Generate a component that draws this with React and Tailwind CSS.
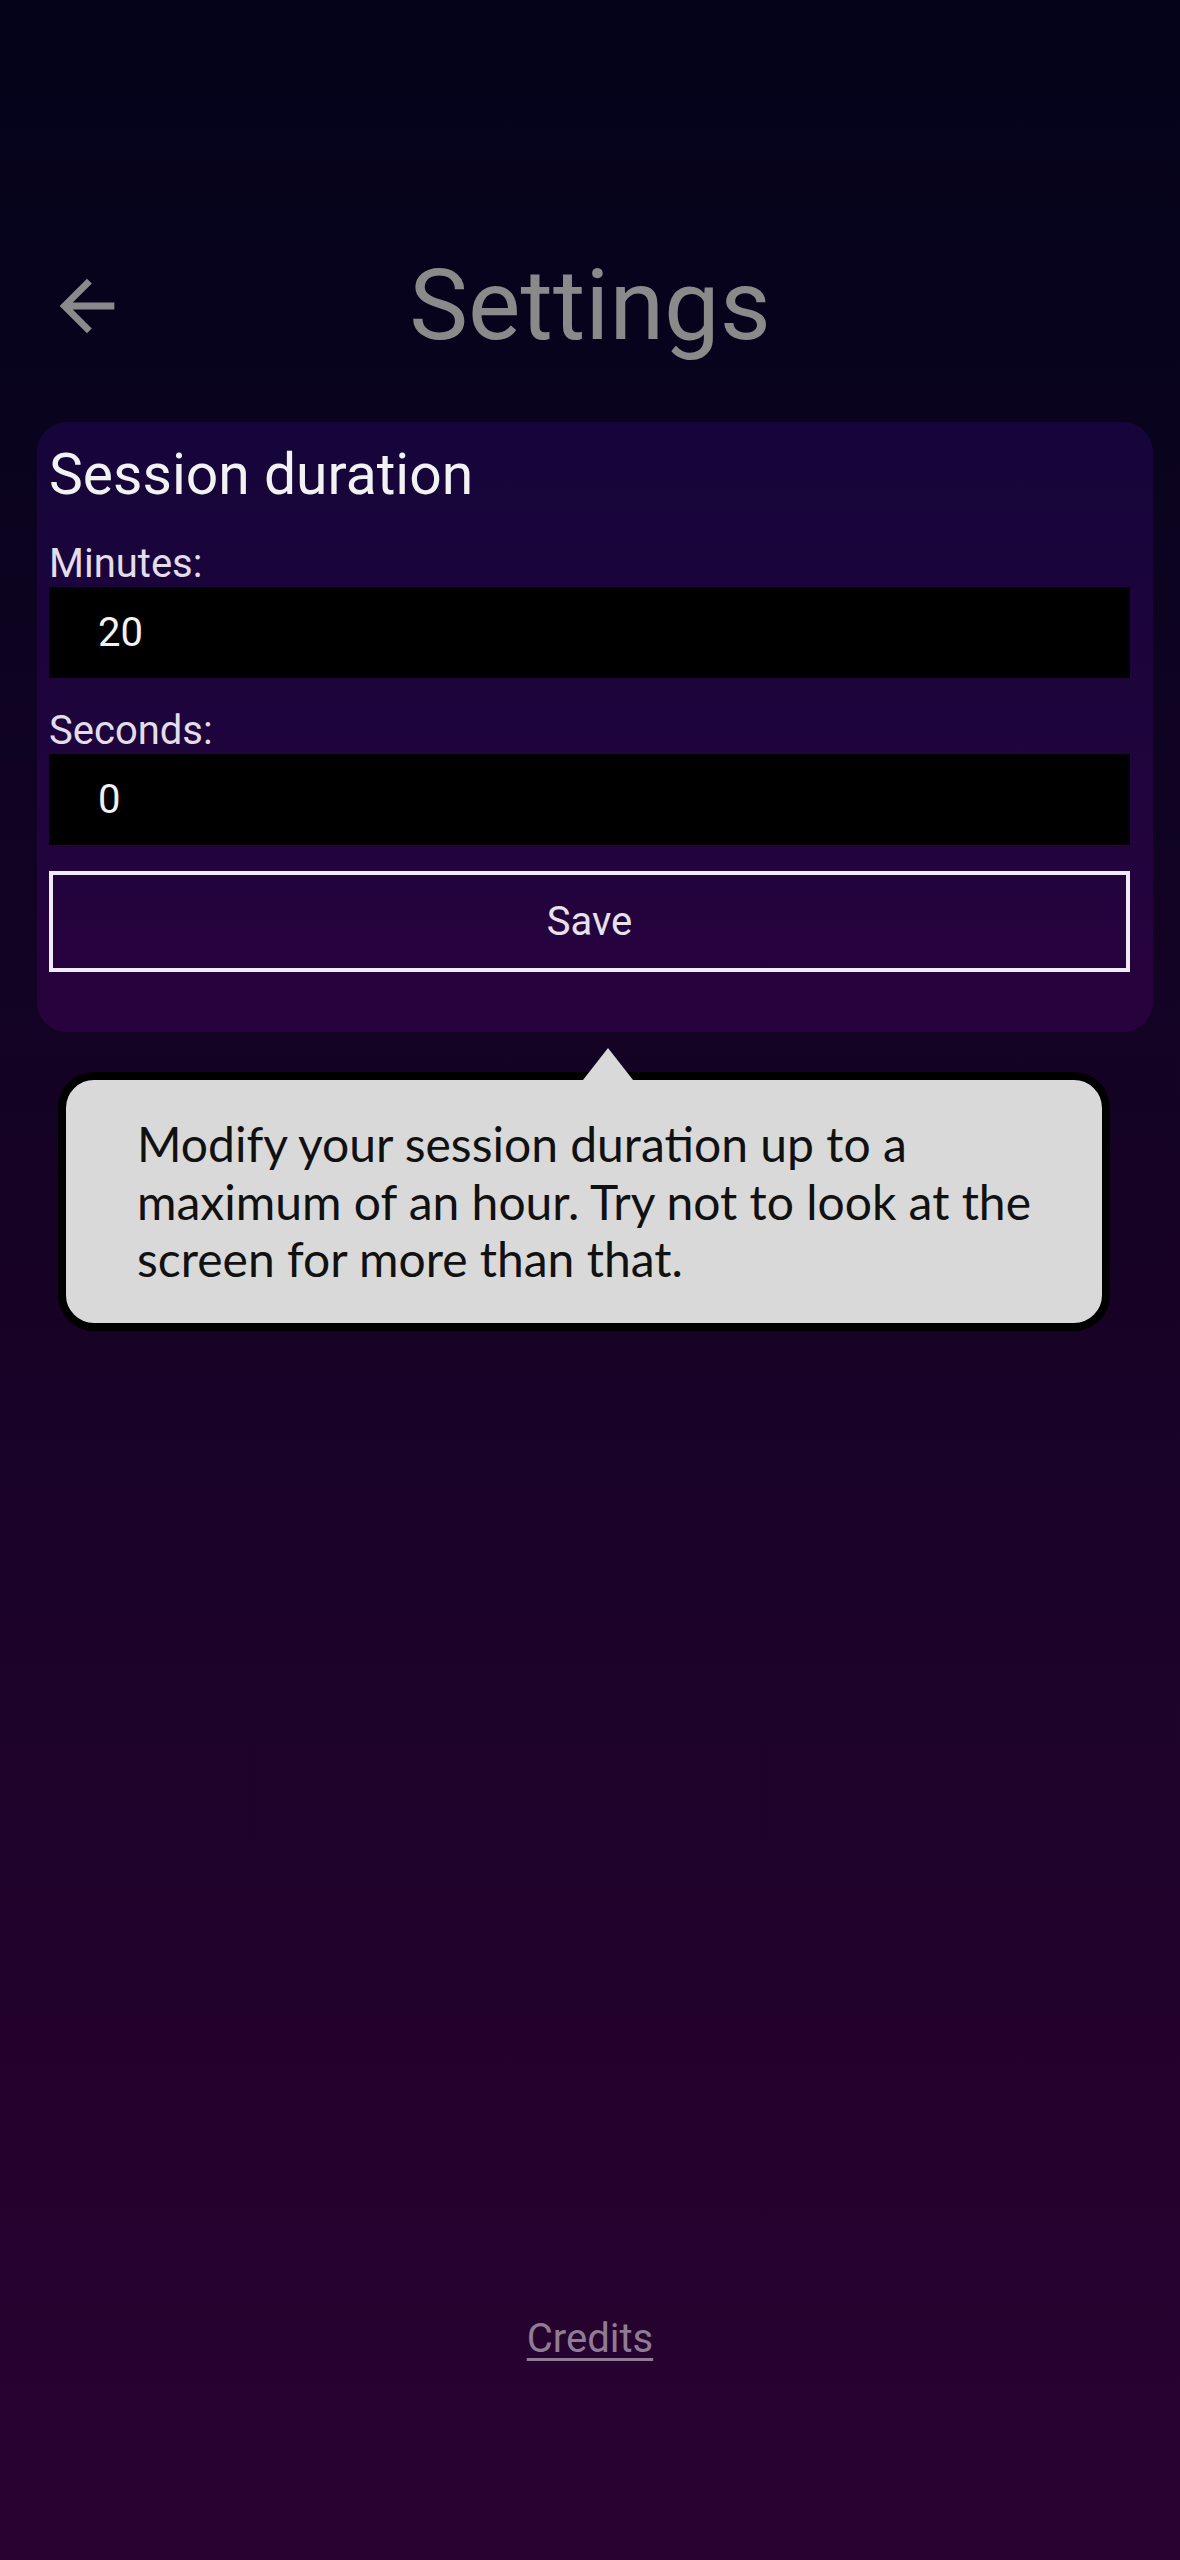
import React, { useState } from "react";

const BackArrow = () => (
  <svg viewBox="0 0 24 24" className="w-[82px] h-[82px]" fill="#8a8a8a">
    <path d="M20 11H7.83l5.59-5.59L12 4l-8 8 8 8 1.41-1.41L7.83 13H20v-2z" />
  </svg>
);

const Field = ({ label, value, onChange, className }) => (
  <div className={className}>
    <label className="block text-[40px] leading-[47px] text-[#e2dde9]">{label}</label>
    <input
      type="number"
      value={value}
      onChange={(e) => onChange(e.target.value)}
      className="block w-full h-[91px] bg-black text-[#f2f2f2] text-[40px] pl-[49px] outline-none [appearance:textfield] [&::-webkit-inner-spin-button]:appearance-none [&::-webkit-outer-spin-button]:appearance-none"
    />
  </div>
);

const App = () => {
  const [minutes, setMinutes] = useState("20");
  const [seconds, setSeconds] = useState("0");

  return (
    <div
      className="min-h-[2560px] flex flex-col bg-gradient-to-b from-[#04031a] via-[#170226] to-[#2a0232]"
      style={{ fontFamily: "Roboto, 'Liberation Sans', sans-serif" }}
    >
      {/* header */}
      <div className="mt-[247px] h-[117px] grid grid-cols-[1fr_auto_1fr] items-center">
        <div className="pl-[46px] flex items-center">
          <button type="button" className="block">
            <BackArrow />
          </button>
        </div>
        <h1 className="text-[99px] leading-[117px] text-[#8a8a8a]">Settings</h1>
        <div />
      </div>

      {/* session card */}
      <div className="mt-[58px] ml-[37px] mr-[27px] rounded-[30px] bg-gradient-to-b from-[#15053a] to-[#28023e] pt-[19px] pl-[12px] pr-[23px] pb-[60px]">
        <h2 className="text-[57px] leading-[68px] text-[#f2f2f2]">Session duration</h2>
        <Field className="mt-[31px]" label="Minutes:" value={minutes} onChange={setMinutes} />
        <Field className="mt-[29px]" label="Seconds:" value={seconds} onChange={setSeconds} />
        <button
          type="button"
          className="mt-[26px] block w-full h-[101px] border-[4px] border-[#f1eaf8] bg-transparent text-[40px] text-[#e6e1ec]"
        >
          Save
        </button>
      </div>

      {/* tooltip */}
      <div className="relative mt-[40px] ml-[58px] w-[1052px] rounded-[36px] border-[8px] border-black bg-[#d9d9d9] pt-[35px] pb-[35px] pl-[71px] pr-[60px]">
        <div className="absolute top-[-32px] left-[517px] w-0 h-0 border-l-[25px] border-r-[25px] border-b-[32px] border-l-transparent border-r-transparent border-b-[#d9d9d9]" />
        <p
          className="text-[48px] leading-[57.5px] text-[#111111]"
          style={{ fontFamily: "Lato, 'Open Sans', sans-serif" }}
        >
          Modify your session duration up to a maximum of an hour. Try not to look at the screen for more than that.
        </p>
      </div>

      {/* footer */}
      <div className="mt-auto mb-[197px] flex justify-center">
        <a href="#" className="text-[40px] leading-[48px] text-[#8f7c94] underline underline-offset-[6px] decoration-[3px]">
          Credits
        </a>
      </div>
    </div>
  );
};

export default App;
